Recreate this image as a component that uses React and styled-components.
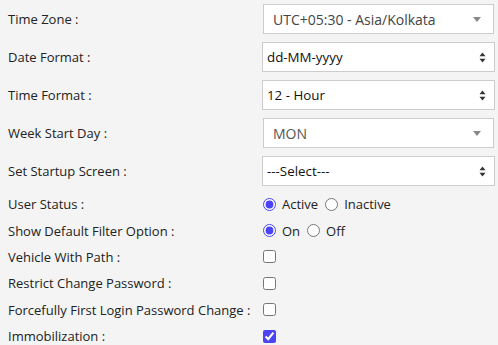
import React from "react";
import styled, { createGlobalStyle } from "styled-components";

const GlobalStyle = createGlobalStyle`
  html, body {
    margin: 0;
    padding: 0;
    background: #f4f4f4;
  }
  body {
    font-family: "Open Sans", "Liberation Sans", sans-serif;
  }
`;

const SELECTS = [
  { label: "Time Zone :", kind: "select2", value: "UTC+05:30 - Asia/Kolkata", tone: "#444" },
  { label: "Date Format :", kind: "native", options: ["dd-MM-yyyy", "MM-dd-yyyy", "yyyy-MM-dd"] },
  { label: "Time Format :", kind: "native", options: ["12 - Hour", "24 - Hour"] },
  { label: "Week Start Day :", kind: "select2", value: "MON", tone: "#555" },
  { label: "Set Startup Screen :", kind: "native", options: ["---Select---"] },
];

const RADIOS = [
  { label: "User Status :", name: "status", options: ["Active", "Inactive"] },
  { label: "Show Default Filter Option :", name: "filter", options: ["On", "Off"] },
];

const CHECKS = [
  { label: "Vehicle With Path :", checked: false },
  { label: "Restrict Change Password :", checked: false },
  { label: "Forcefully First Login Password Change :", checked: false },
  { label: "Immobilization :", checked: true },
];

const UpDown = () => (
  <ArrowIcon width="7" height="11" viewBox="0 0 7 11">
    <path d="M3.5 0.5 L6.5 4.2 L0.5 4.2 Z" fill="#333" />
    <path d="M3.5 10.5 L6.5 6.8 L0.5 6.8 Z" fill="#333" />
  </ArrowIcon>
);

const App = () => {
  return (
    <>
      <GlobalStyle />
      <Form>
        {SELECTS.map((item, index) => (
          <SelectRow key={index} $last={index === SELECTS.length - 1}>
            <Label>{item.label}</Label>
            {item.kind === "select2" ? (
              <FakeSelect>
                <FakeValue $tone={item.tone}>{item.value}</FakeValue>
                <Caret />
              </FakeSelect>
            ) : (
              <SelectWrap>
                <NativeSelect defaultValue={item.options[0]}>
                  {item.options.map((opt) => (
                    <option key={opt}>{opt}</option>
                  ))}
                </NativeSelect>
                <UpDown />
              </SelectWrap>
            )}
          </SelectRow>
        ))}
        {RADIOS.map((item) => (
          <Row key={item.name}>
            <Label>{item.label}</Label>
            <Choices>
              {item.options.map((opt, i) => (
                <Choice key={opt}>
                  <Radio type="radio" name={item.name} defaultChecked={i === 0} />
                  <span>{opt}</span>
                </Choice>
              ))}
            </Choices>
          </Row>
        ))}
        {CHECKS.map((item, index) => (
          <Row key={index}>
            <Label>{item.label}</Label>
            <Choices>
              <Check type="checkbox" defaultChecked={item.checked} />
            </Choices>
          </Row>
        ))}
      </Form>
    </>
  );
};

const Form = styled.div`
  padding: 4px 0 0 8px;
  width: 487px;
  color: #222;
`;

const SelectRow = styled.div`
  display: grid;
  grid-template-columns: 254px 233px;
  align-items: center;
  height: 30px;
  margin-bottom: ${(p) => (p.$last ? "5px" : "8px")};
`;

const Row = styled.div`
  display: grid;
  grid-template-columns: 254px 233px;
  align-items: center;
  height: 26.4px;
`;

const Label = styled.div`
  font-size: 13px;
  line-height: 18px;
  color: #222;
  white-space: nowrap;
`;

const FakeSelect = styled.div`
  box-sizing: border-box;
  margin-left: 1px;
  width: 231px;
  height: 30px;
  background: #fff;
  border: 1px solid #ccc;
  display: flex;
  align-items: center;
  padding: 0 10px 0 9px;
`;

const FakeValue = styled.span`
  flex: 1;
  font-size: 14px;
  color: ${(p) => p.$tone};
  white-space: nowrap;
`;

const Caret = styled.span`
  width: 0;
  height: 0;
  border-left: 4px solid transparent;
  border-right: 4px solid transparent;
  border-top: 5px solid #888;
  margin-right: 2px;
`;

const SelectWrap = styled.div`
  position: relative;
  width: 233px;
  height: 30px;
`;

const NativeSelect = styled.select`
  box-sizing: border-box;
  width: 233px;
  height: 30px;
  background: #fff;
  border: 1px solid #ccc;
  border-radius: 0;
  padding: 0 24px 0 4px;
  appearance: none;
  font-family: "Open Sans", "Liberation Sans", sans-serif;
  font-size: 13.33px;
  color: #111;
  outline: none;
`;

const ArrowIcon = styled.svg`
  position: absolute;
  right: 9px;
  top: 10px;
  pointer-events: none;
`;

const Choices = styled.div`
  display: flex;
  align-items: center;
  padding-left: 1px;
  font-size: 13px;
  color: #222;
`;

const Choice = styled.label`
  display: flex;
  align-items: center;
  gap: 6px;
  margin-right: 7px;
`;

const Radio = styled.input`
  margin: 0;
  width: 13px;
  height: 13px;
  accent-color: #4b44f5;
`;

const Check = styled.input`
  margin: 0;
  width: 13px;
  height: 13px;
  accent-color: #4b44f5;
`;

export default App;
